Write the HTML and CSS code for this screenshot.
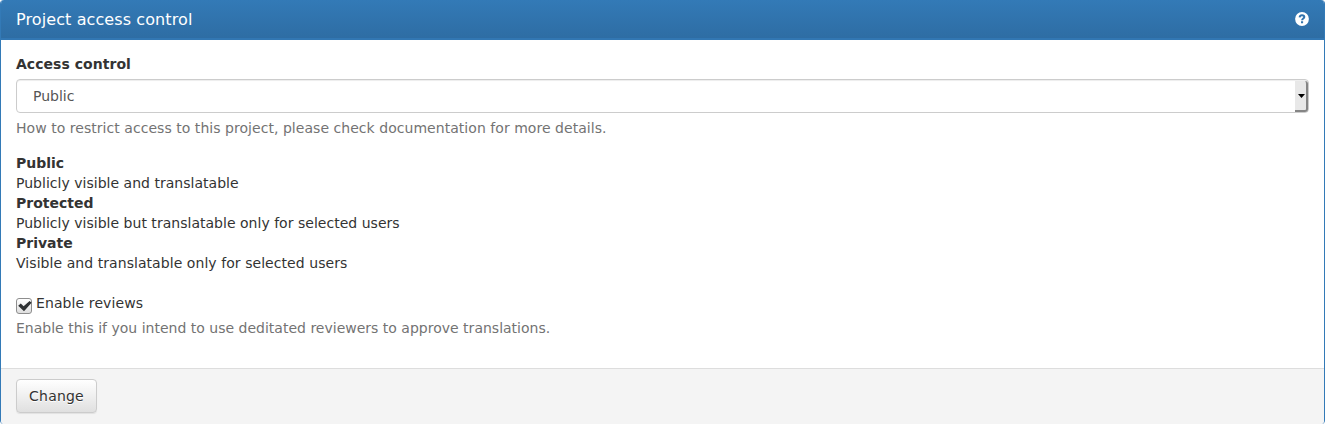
FILE: index.html
```html
<!DOCTYPE html>
<html lang="en">
<head>
<meta charset="utf-8">
<title>Project access control</title>
<link rel="stylesheet" href="styles.css">
</head>
<body>
<form class="panel">
  <header class="panel-heading">
    <h4 class="panel-title">Project access control</h4>
    <svg class="help" viewBox="0 0 14 14" aria-label="Help"><circle cx="7" cy="7" r="6.9" fill="#fff"/><path d="M4.6 5.4C4.8 4 5.7 3.3 7 3.3c1.3 0 2.3.8 2.3 1.8C9.3 6.6 7.1 6.5 7.1 8.3" fill="none" stroke="#3173ad" stroke-width="2"/><path d="M6 9.2h2.1v2H6z" fill="#3173ad"/></svg>
  </header>
  <div class="panel-body">
    <label class="label">Access control</label>
    <div class="select"><span class="value">Public</span><span class="arrow"><svg viewBox="0 0 7 4"><path d="M0 0h7L3.5 4z"/></svg></span></div>
    <p class="hint access-hint">How to restrict access to this project, please check documentation for more details.</p>
    <dl class="levels">
      <dt>Public</dt><dd>Publicly visible and translatable</dd>
      <dt>Protected</dt><dd>Publicly visible but translatable only for selected users</dd>
      <dt>Private</dt><dd class="private">Visible and translatable only for selected users</dd>
    </dl>
    <div class="check"><span class="box"><svg viewBox="0 0 16 16"><path d="M2.2 7.8L4.8 5.6 7.6 8.3 13.6 3 15.6 4.7 8 13.3z" fill="#2e3133"/></svg></span><label>Enable reviews</label></div>
    <p class="hint">Enable this if you intend to use deditated reviewers to approve translations.</p>
  </div>
  <footer class="panel-footer"><button type="button" class="button">Change</button></footer>
</form>
</body>
</html>
```
FILE: styles.css
```css
* { box-sizing: border-box; }
body {
  margin: 0;
  background: #fff;
  color: #333;
  font: 14px/20px "DejaVu Sans", sans-serif;
}
.panel {
  height: 424px;
  display: flex;
  flex-direction: column;
  border: solid #337ab7;
  border-width: 0 1px;
  border-radius: 4px;
  overflow: hidden;
  box-shadow: 0 1px 2px rgba(0, 0, 0, .05);
}
.panel-heading {
  height: 40px;
  padding: 0 15px;
  display: flex;
  align-items: center;
  justify-content: space-between;
  color: #fff;
  background: linear-gradient(#337ab7, #2e6da4);
  border-bottom: 2px solid #3277b3;
}
.panel-title {
  margin: 0;
  padding-top: 2px;
  font-size: 16px;
  font-weight: 400;
  line-height: 18px;
  letter-spacing: .1px;
}
.help { width: 14px; height: 14px; }
.panel-body { flex: 1; padding: 14px 15px 0; }
.label { display: block; font-weight: 700; margin-bottom: 5px; letter-spacing: .04px; }
.select {
  height: 34px;
  display: flex;
  justify-content: space-between;
  align-items: center;
  padding-left: 16px;
  color: #555;
  border: 1px solid #ccc;
  border-radius: 4px;
  box-shadow: inset 0 1px 1px rgba(0, 0, 0, .075);
}
.arrow {
  width: 13px;
  height: 31px;
  display: flex;
  align-items: center;
  justify-content: center;
  background: #e8e8e8;
  border: solid #858585;
  border-width: 0 2px 2px 0;
  border-radius: 0 3px 3px 0;
}
.arrow svg { width: 7px; height: 4px; margin: 2px 0 0 1px; }
.hint { margin: 5px 0 0; color: #737373; letter-spacing: .005px; }
.access-hint { letter-spacing: .042px; }
.levels { margin: 15px 0 20px; }
.levels dt { font-weight: 700; }
.levels dd { margin: 0; letter-spacing: .02px; }
.levels .private { letter-spacing: .06px; }
.check { display: flex; height: 20px; gap: 4px; letter-spacing: .1px; }
.box {
  width: 16px;
  height: 16px;
  margin-top: 5px;
  border: 1px solid #8e8e8e;
  border-radius: 3px;
  background: linear-gradient(#fff, #dedede);
}
.box svg { display: block; width: 16px; height: 16px; margin: -1px; }
.panel-footer {
  height: 56px;
  padding: 10px 15px;
  background: #f4f4f4;
  border-top: 1px solid #ddd;
}
.button {
  width: 81px;
  height: 34px;
  padding: 0;
  display: block;
  color: #333;
  font: inherit;
  letter-spacing: .2px;
  text-shadow: 0 1px 0 #fff;
  background: linear-gradient(#fff, #e0e0e0);
  border: 1px solid #ccc;
  border-radius: 4px;
  box-shadow: inset 0 1px 0 rgba(255, 255, 255, .15), 0 1px 1px rgba(0, 0, 0, .075);
}
```
